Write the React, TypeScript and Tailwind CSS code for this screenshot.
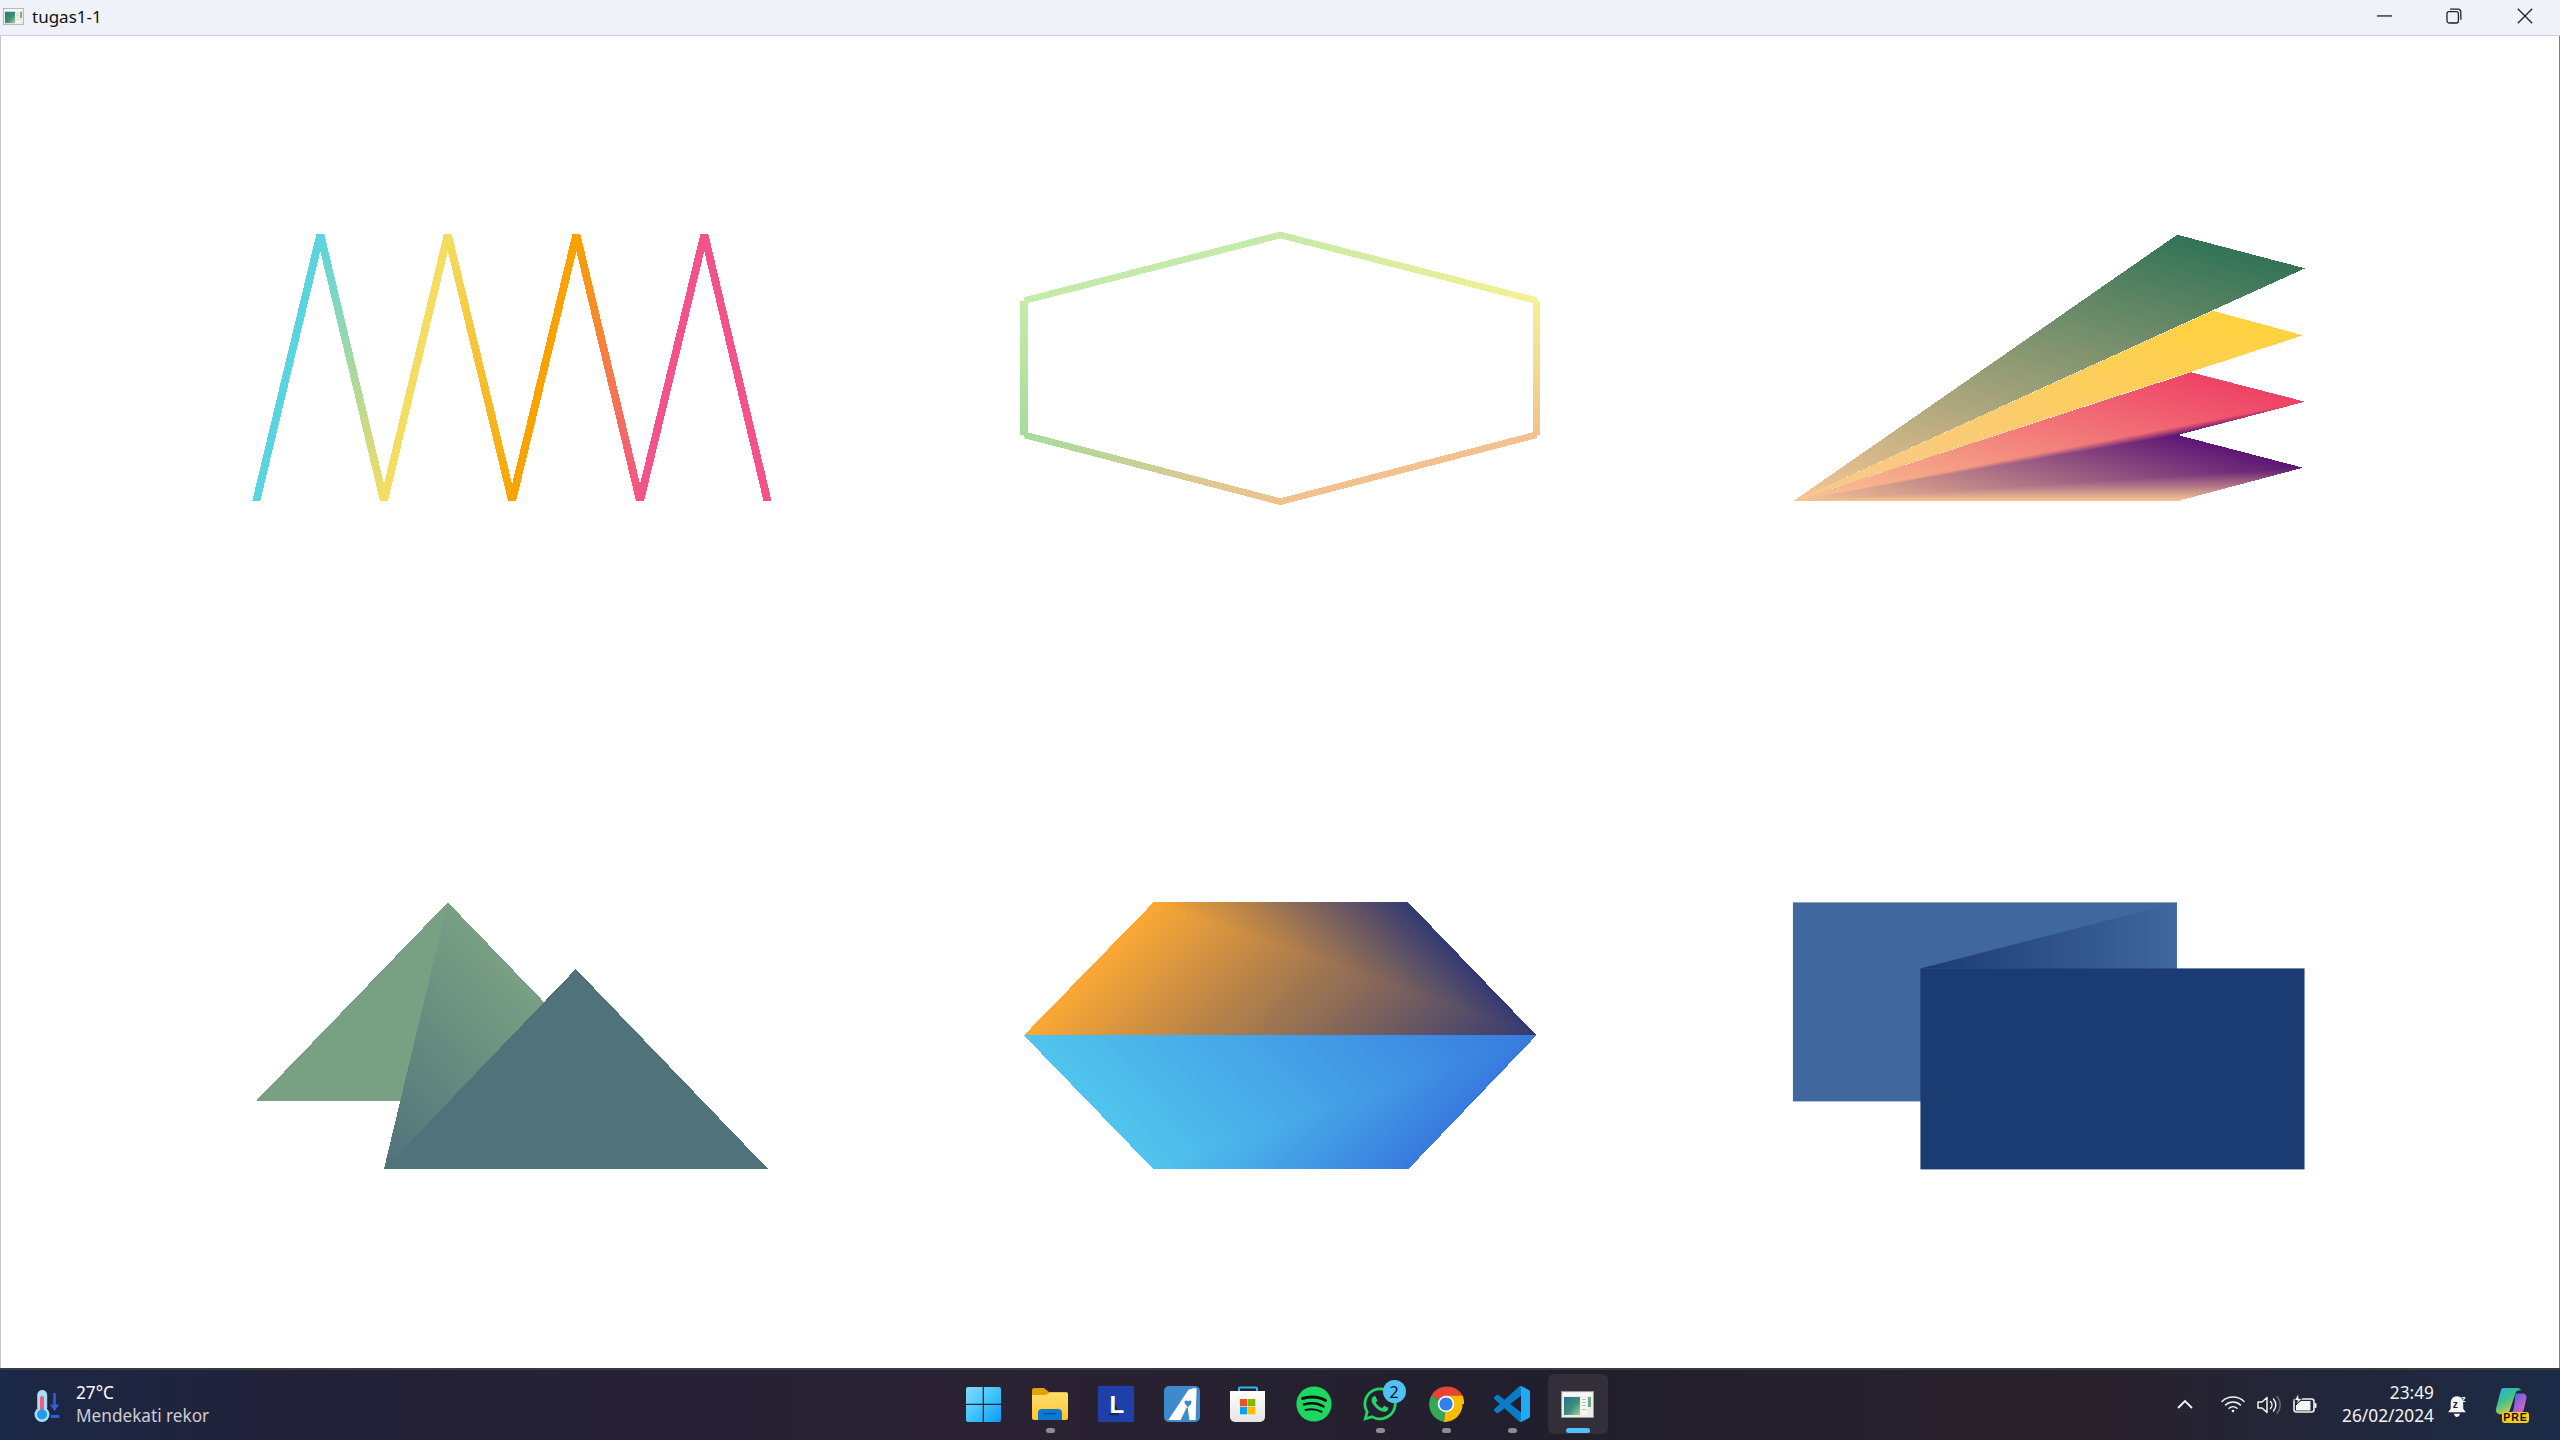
import React from "react";
import { FaWhatsapp } from "react-icons/fa";

type P = [number, number];
const str = (ps: P[]) => ps.map((p) => p.join(",")).join(" ");

function foot(a: P, b: P, c: P): P {
  const dx = c[0] - b[0];
  const dy = c[1] - b[1];
  const t = ((a[0] - b[0]) * dx + (a[1] - b[1]) * dy) / (dx * dx + dy * dy);
  return [b[0] + t * dx, b[1] + t * dy];
}

function hex(c: string): number[] {
  return [1, 3, 5].map((i) => parseInt(c.slice(i, i + 2), 16));
}
function mix(a: string, b: string, t: number): string {
  const x = hex(a);
  const y = hex(b);
  return (
    "#" +
    x.map((v, i) => Math.round(v + (y[i] - v) * t).toString(16).padStart(2, "0")).join("")
  );
}

function GradPoly({ id, pts, from, to, c1, c2 }: { id: string; pts: P[]; from: P; to: P; c1: string; c2: string }) {
  return (
    <>
      <defs>
        <linearGradient id={id} gradientUnits="userSpaceOnUse" x1={from[0]} y1={from[1]} x2={to[0]} y2={to[1]}>
          <stop offset="0" stopColor={c1} />
          <stop offset="1" stopColor={c2} />
        </linearGradient>
      </defs>
      <polygon points={str(pts)} fill={`url(#${id})`} />
    </>
  );
}

// triangle: a has colour ca, b and c share colour cb
function Tri({ id, a, b, c, ca, cb }: { id: string; a: P; b: P; c: P; ca: string; cb: string }) {
  return <GradPoly id={id} pts={[a, b, c]} from={a} to={foot(a, b, c)} c1={ca} c2={cb} />;
}

function Gouraud({ id, a, b, c, ca, cb, cc, n = 28 }: { id: string; a: P; b: P; c: P; ca: string; cb: string; cc: string; n?: number }) {
  const items = [];
  for (let i = 0; i < n; i++) {
    const t0 = i / n;
    const t1 = (i + 1) / n;
    const p0: P = [b[0] + (c[0] - b[0]) * t0, b[1] + (c[1] - b[1]) * t0];
    const p1: P = [b[0] + (c[0] - b[0]) * t1, b[1] + (c[1] - b[1]) * t1];
    const col = mix(cb, cc, (t0 + t1) / 2);
    items.push(<GradPoly key={i} id={`${id}-${i}`} pts={[a, p0, p1]} from={a} to={foot(a, p0, p1)} c1={ca} c2={col} />);
  }
  return <>{items}</>;
}

// the figures are measured on a 522.67-wide grid, drawn 560 wide
function Figure({ children, smooth }: { children: React.ReactNode; smooth?: boolean }) {
  return (
    <svg
      width="560"
      height="300"
      viewBox="0 0 522.67 300"
      preserveAspectRatio="none"
      shapeRendering={smooth ? undefined : "crispEdges"}
      className="block"
    >
      {children}
    </svg>
  );
}

function ZigZag() {
  const xs = [24.5, 84.3, 143.7, 203.3, 263.3, 323.3, 382.7, 442.7, 501.7];
  const ys = [291, 24.3, 291, 24.3, 291, 24.3, 291, 24.3, 291];
  const cols: [string, string][] = [
    ["#59D5E0", "#59D5E0"],
    ["#59D5E0", "#F5DD61"],
    ["#F5DD61", "#F5DD61"],
    ["#F5DD61", "#FAA300"],
    ["#FAA300", "#FAA300"],
    ["#FAA300", "#F4538A"],
    ["#F4538A", "#F4538A"],
    ["#F4538A", "#F4538A"],
  ];
  const h = 3.75;
  return (
    <Figure>
      {cols.map((c, i) => (
        <GradPoly
          key={i}
          id={`zz${i}`}
          pts={[
            [xs[i] - h, ys[i]],
            [xs[i] + h, ys[i]],
            [xs[i + 1] + h, ys[i + 1]],
            [xs[i + 1] - h, ys[i + 1]],
          ]}
          from={[xs[i], ys[i]]}
          to={[xs[i + 1], ys[i + 1]]}
          c1={c[0]}
          c2={c[1]}
        />
      ))}
    </Figure>
  );
}

function HexOutline() {
  const T: P = [261.7, 25];
  const RT: P = [501, 90.7];
  const RB: P = [501, 224.7];
  const B: P = [261.7, 291.7];
  const LB: P = [22.3, 224.7];
  const LT: P = [22.3, 90.7];
  const segs: [P, P, string, string][] = [
    [T, RT, "#C5EBAA", "#F6F193"],
    [RT, RB, "#F6F193", "#F2C18D"],
    [RB, B, "#F2C18D", "#F2C18D"],
    [B, LB, "#F2C18D", "#A5DD9B"],
    [LB, LT, "#A5DD9B", "#C5EBAA"],
    [LT, T, "#C5EBAA", "#C5EBAA"],
  ];
  const h = 3.4;
  return (
    <Figure>
      {segs.map(([a, b, c1, c2], i) => {
        const vertical = a[0] === b[0];
        const pts: P[] = vertical
          ? [
              [a[0] - h, a[1]],
              [a[0] + h, a[1]],
              [b[0] + h, b[1]],
              [b[0] - h, b[1]],
            ]
          : [
              [a[0], a[1] - h],
              [a[0], a[1] + h],
              [b[0], b[1] + h],
              [b[0], b[1] - h],
            ];
        return <GradPoly key={i} id={`hx${i}`} pts={pts} from={a} to={b} c1={c1} c2={c2} />;
      })}
    </Figure>
  );
}

function Fan() {
  const A: P = [21.5, 291.3];
  const peach = "#F8C794";
  const green = "#337357";
  const gold = "#FFD23F";
  const pink = "#EE4266";
  const purple = "#5E1675";
  const P1: P = [380, 24.7];
  const P2: P = [499.3, 58.3];
  const P3: P = [413.3, 100.8];
  const P4: P = [497.5, 125.3];
  const P5: P = [393, 162.3];
  const P6: P = [499.3, 191.7];
  const P7: P = [380.5, 225];
  const P8: P = [497.5, 257.7];
  const P9: P = [379.5, 291.3];
  return (
    <Figure>
      <Tri id="f1" a={A} b={P1} c={P2} ca={peach} cb={green} />
      <Tri id="f2" a={A} b={P3} c={P4} ca={peach} cb={gold} />
      <Tri id="f3" a={A} b={P5} c={P6} ca={peach} cb={pink} />
      <Gouraud id="f4" a={A} b={P6} c={P7} ca={peach} cb={pink} cc={purple} />
      <Tri id="f5" a={A} b={P7} c={P8} ca={peach} cb={purple} />
      <GradPoly id="f6" pts={[A, P8, P9]} from={[P8[0], P8[1]]} to={[P8[0], P9[1]]} c1={purple} c2={peach} />
    </Figure>
  );
}

function Mountains() {
  const apex: P = [203.3, 22.3];
  const left: P = [24.3, 221];
  const right: P = [382, 221];
  const base: P = [143.7, 289];
  return (
    <Figure>
      <polygon points={str([left, apex, right])} fill="#78A083" />
      <Tri id="m1" a={base} b={apex} c={right} ca="#50727B" cb="#78A083" />
      <polygon points={str([base, [322.7, 89], [502.2, 289]])} fill="#50727B" />
    </Figure>
  );
}

function HexFilled() {
  const L: P = [22.3, 155.3];
  const R: P = [500.7, 155.3];
  const TL: P = [143.3, 22.3];
  const TR: P = [381, 22.3];
  const BL: P = [143.3, 289.3];
  const BR: P = [381, 289.3];
  const orange = "#FBA834";
  const navy = "#333A73";
  const cyan = "#50C4ED";
  const blue = "#387ADF";
  return (
    <Figure>
      <Tri id="h1" a={R} b={L} c={TL} ca={navy} cb={orange} />
      <Tri id="h2" a={TL} b={TR} c={R} ca={orange} cb={navy} />
      <Tri id="h3" a={R} b={L} c={BL} ca={blue} cb={cyan} />
      <Tri id="h4" a={BL} b={BR} c={R} ca={cyan} cb={blue} />
    </Figure>
  );
}

function Rects() {
  return (
    <Figure smooth>
      <rect x="21.4" y="22.4" width="358.3" height="199" fill="#40679E" />
      <GradPoly id="r1" pts={[[140.4, 88.6], [379.7, 22.4], [379.7, 88.6]]} from={[140.4, 0]} to={[379.7, 0]} c1="#1B3C73" c2="#40679E" />
      <rect x="140.4" y="88.4" width="358.5" height="201" fill="#1B3C73" />
    </Figure>
  );
}

function AppWindowIcon({ w, h }: { w: number; h: number }) {
  return (
    <svg width={w} height={h} viewBox="0 0 33 27" className="block">
      <defs>
        <linearGradient id={`awg${w}`} x1="0" y1="0" x2="1" y2="1">
          <stop offset="0" stopColor="#2E6F8F" />
          <stop offset="0.55" stopColor="#3C8F78" />
          <stop offset="1" stopColor="#A8CFA0" />
        </linearGradient>
      </defs>
      <rect x="0.5" y="0.5" width="32" height="26" fill="#ECECE8" stroke="#9A9A9A" />
      <rect x="2" y="2" width="29" height="3" fill="#F8F8F8" />
      <rect x="3" y="6" width="16" height="18" fill={`url(#awg${w})`} />
      <rect x="20" y="6" width="6" height="18" fill="#F6F6F2" />
      <rect x="21" y="8" width="4" height="1" fill="#B9B9B9" />
      <rect x="21" y="11" width="4" height="1" fill="#B9B9B9" />
      <rect x="21" y="14" width="4" height="1" fill="#B9B9B9" />
      <rect x="21" y="18" width="4" height="1" fill="#B9B9B9" />
      <rect x="27" y="6" width="3" height="10" fill="#6FA98A" />
    </svg>
  );
}

function TitleBar() {
  return (
    <div className="h-[36px] flex items-center bg-[#EFF2F8] border-b border-b-[#CFCFD2] shrink-0 relative">
      <div className="ml-[3px] mr-[8px] -mt-[3px]">
        <AppWindowIcon w={21} h={17} />
      </div>
      <span className="text-[17px] leading-none text-[#111] -mt-[2px] font-['Noto_Sans',sans-serif]">tugas1-1</span>
      <div className="ml-auto flex items-center -mt-[3px]">
        <svg width="15" height="2" viewBox="0 0 15 2" className="block mr-[54px]">
          <rect width="15" height="1.3" y="0.3" fill="#222" />
        </svg>
        <svg width="16" height="16" viewBox="0 0 16 16" fill="none" stroke="#222" strokeWidth="1.3" className="block mr-[55px]">
          <rect x="1" y="3.6" width="11.4" height="11.4" rx="2" />
          <path d="M4 1.2h7.8a3 3 0 0 1 3 3v7.6" />
        </svg>
        <svg width="16" height="16" viewBox="0 0 16 16" fill="none" stroke="#222" strokeWidth="1.3" className="block mr-[27px]">
          <path d="M0.8 0.8 15.2 15.2M15.2 0.8 0.8 15.2" />
        </svg>
      </div>
    </div>
  );
}

function Thermo() {
  return (
    <svg width="28" height="33" viewBox="0 0 28 33" className="block">
      <rect x="4.2" y="1" width="10" height="22" rx="5" fill="#A9DBFA" />
      <circle cx="9" cy="25.5" r="7.5" fill="#A9DBFA" />
      <rect x="7" y="7" width="4" height="15" rx="2" fill="#F0607A" />
      <circle cx="9" cy="25.5" r="5" fill="#1E9BEA" />
      <path d="M21.5 4v16" stroke="#2F5FD8" strokeWidth="2.6" />
      <path d="M16.8 15.5h9.4l-4.7 6.5z" fill="#2F5FD8" />
      <rect x="17.5" y="26" width="9" height="3" rx="1.2" fill="#2F5FD8" />
    </svg>
  );
}

function WinLogo() {
  return (
    <svg width="35" height="35" viewBox="0 0 35 35" className="block">
      <defs>
        <linearGradient id="wl" x1="0" y1="0" x2="1" y2="1">
          <stop offset="0" stopColor="#86DBFB" />
          <stop offset="0.5" stopColor="#3FC5FB" />
          <stop offset="1" stopColor="#0A97F7" />
        </linearGradient>
        <clipPath id="wlc">
          <path d="M0 2a2 2 0 0 1 2-2h14.7v16.7H0zM18 0h15a2 2 0 0 1 2 2v14.7H18zM0 18h16.7v17H2a2 2 0 0 1-2-2zM18 18h17v15a2 2 0 0 1-2 2H18z" />
        </clipPath>
      </defs>
      <rect width="35" height="35" fill="url(#wl)" clipPath="url(#wlc)" />
    </svg>
  );
}

function Folder() {
  return (
    <svg width="36" height="33" viewBox="0 0 36 33" className="block">
      <defs>
        <linearGradient id="fd" x1="0" y1="0" x2="0" y2="1">
          <stop offset="0" stopColor="#FFDD6E" />
          <stop offset="1" stopColor="#FFC52F" />
        </linearGradient>
      </defs>
      <path d="M0 2a2 2 0 0 1 2-2h10l5 4h17a2 2 0 0 1 2 2v4H0z" fill="#DFA20A" />
      <path d="M0 7h14l4-2.500h16a2 2 0 0 1 2 2V30a2 2 0 0 1-2 2H2a2 2 0 0 1-2-2z" fill="url(#fd)" />
      <path d="M6 32v-7a4 4 0 0 1 4-4h16a4 4 0 0 1 4 4v7z" fill="#0B79D0" />
      <rect x="12" y="25" width="12" height="1.2" fill="#0A4E8C" />
    </svg>
  );
}

function LBox() {
  return (
    <svg width="36" height="36" viewBox="0 0 36 36" className="block">
      <rect width="36" height="36" fill="#1F3FAB" />
      <path d="M13 9v17l-3 3 1 .2h10V26z" fill="#0B2A55" />
      <text x="11.5" y="26.500" fontFamily="'Liberation Sans',sans-serif" fontWeight="700" fontSize="24" fill="#FFFFFF">L</text>
    </svg>
  );
}

function AIcon() {
  return (
    <svg width="36" height="36" viewBox="0 0 36 36" className="block">
      <rect width="36" height="36" rx="5" fill="#3E8ACB" />
      <path d="M4.300 34 24.300 4c2.500-1.500 6-2 8.300-1.700L31.600 34h-6.300l-1.800-14-7 14z" fill="#FFFFFF" />
      <path d="M20.500 15.500c1-1.600 3-1.200 3.500 0 .6-1.200 2.500-1.600 3.500 0 .6 1.500-1.500 4-3.500 5.500-2-1.500-4-4-3.500-5.500z" fill="#3E8ACB" />
    </svg>
  );
}

function StoreIcon() {
  return (
    <svg width="36" height="36" viewBox="0 0 36 36" className="block">
      <defs>
        <linearGradient id="st" x1="0" y1="0" x2="0" y2="1">
          <stop offset="0" stopColor="#FFFFFF" />
          <stop offset="1" stopColor="#E4E4E4" />
        </linearGradient>
      </defs>
      <path d="M9 6V2.500a1 1 0 0 1 1-1h16a1 1 0 0 1 1 1V6" fill="none" stroke="#2EB8F0" strokeWidth="2" />
      <path d="M0 5h35v26a5 5 0 0 1-5 5H5a5 5 0 0 1-5-5z" fill="url(#st)" />
      <rect x="10" y="13" width="7.300" height="7.300" fill="#F25022" />
      <rect x="18" y="13" width="7.300" height="7.300" fill="#7FBA00" />
      <rect x="10" y="21" width="7.300" height="7.300" fill="#00A4EF" />
      <rect x="18" y="21" width="7.300" height="7.300" fill="#FFB900" />
    </svg>
  );
}

function Spotify() {
  return (
    <svg width="36" height="36" viewBox="0 0 36 36" className="block">
      <circle cx="18" cy="18" r="17.600" fill="#1ED760" />
      <g fill="none" stroke="#111" strokeLinecap="round">
        <path d="M6.500 12.500c8-2.300 16.500-1.700 23 2" strokeWidth="3" />
        <path d="M8 18.500c6.500-1.800 14-1.300 19.500 2" strokeWidth="2.500" />
        <path d="M9.500 24c5.500-1.300 11-.9 16 1.800" strokeWidth="2" />
      </g>
    </svg>
  );
}

function Chrome() {
  return (
    <svg width="36" height="36" viewBox="0 0 36 36" className="block">
      <path d="M18 18 3.400 9.500A18 18 0 0 1 34.600 9.500H18z" fill="#EA4335" />
      <path d="M18 18 3.400 9.500A18 18 0 0 0 16 36z" fill="#34A853" />
      <path d="M18 18h16.600A18 18 0 0 1 16 36l2-18z" fill="#FBBC04" />
      <path d="M18 9.500h16.600a18 18 0 0 1 1.400 8.500H18z" fill="#FBBC04" />
      <circle cx="18" cy="18" r="8.300" fill="#FFFFFF" />
      <circle cx="18" cy="18" r="6.600" fill="#2F80ED" />
    </svg>
  );
}

function VSCode() {
  return (
    <svg width="36" height="36" viewBox="0 0 100 100" className="block">
      <path
        d="M96.500 10.800 75.900.9a6.200 6.200 0 0 0-7.100 1.200L29.300 38.100 12.100 25.100a4.200 4.200 0 0 0-5.300.2L1.300 30.300a4.200 4.200 0 0 0 0 6.200L16.200 50 1.300 63.500a4.200 4.200 0 0 0 0 6.200l5.500 5a4.200 4.200 0 0 0 5.300.2l17.200-13 39.500 36a6.200 6.200 0 0 0 7.100 1.200l20.600-9.900a6.200 6.200 0 0 0 3.500-5.600V16.400a6.200 6.200 0 0 0-3.500-5.600zM75 72.700 45.100 50 75 27.300z"
        fill="#0A7CC7"
      />
      <path d="M71 1 75.900.9 96.500 10.800a6.200 6.200 0 0 1 3.500 5.600v67.200a6.200 6.200 0 0 1-3.500 5.600L75.900 99.100 71 99c2 0 4-2 4-5V6c0-3-2-5-4-5z" fill="#23A9F2" />
    </svg>
  );
}

function Wifi() {
  return (
    <svg width="24" height="18" viewBox="0 0 24 18" fill="none" stroke="#F4F4F4" strokeWidth="1.500" strokeLinecap="round" className="block">
      <path d="M1 6.500a16 16 0 0 1 22 0" />
      <path d="M4.500 10a11 11 0 0 1 15 0" />
      <path d="M8 13.200a6 6 0 0 1 8 0" />
      <circle cx="12" cy="16" r="1.300" fill="#F4F4F4" stroke="none" />
    </svg>
  );
}

function Volume() {
  return (
    <svg width="24" height="20" viewBox="0 0 24 20" fill="none" strokeWidth="1.500" strokeLinecap="round" strokeLinejoin="round" className="block">
      <path d="M1 7v6h4l5 4.500v-15L5 7z" stroke="#F4F4F4" />
      <path d="M13.500 6.500a5 5 0 0 1 0 7" stroke="#F4F4F4" />
      <path d="M16.500 4a9 9 0 0 1 0 12" stroke="#F4F4F4" />
      <path d="M20 1.500a13 13 0 0 1 0 17" stroke="#6A6670" />
    </svg>
  );
}

function Battery() {
  return (
    <svg width="24" height="20" viewBox="0 0 24 20" className="block">
      <rect x="1" y="6" width="20" height="13" rx="2.500" fill="none" stroke="#F4F4F4" strokeWidth="1.600" />
      <rect x="21.500" y="10" width="2" height="5" rx="1" fill="#F4F4F4" />
      <path d="M3 17.500V12L8 8h9.500v9.500z" fill="#F4F4F4" />
      <path d="M5.500 0 1.500 7.500h3L3 12 9 5.500H5.800z" fill="#F4F4F4" stroke="#241F2B" strokeWidth="0.800" />
    </svg>
  );
}

function Bell() {
  return (
    <svg width="22" height="24" viewBox="0 0 20 23" className="block overflow-visible">
      <path d="M9 3C4 3 3 7 3 11v4l-2.500 3.500h17L15 15v-4c0-4-1-8-6-8z" fill="#F4F4F4" />
      <path d="M6 20h6c-.5 2-1.500 3-3 3s-2.500-1-3-3z" fill="#F4F4F4" />
      <text x="5" y="14.500" fontFamily="'Liberation Sans',sans-serif" fontWeight="700" fontSize="10" fill="#241F2B">z</text>
      <text x="13" y="8.500" fontFamily="'Liberation Sans',sans-serif" fontWeight="700" fontSize="8.500" fill="#F4F4F4">z</text>
    </svg>
  );
}

function Copilot() {
  return (
    <div className="relative w-[36px] h-[35px]">
      <svg width="34" height="28" viewBox="0 0 34 30" className="absolute left-0 top-0">
        <defs>
          <linearGradient id="cpa" x1="0" y1="0" x2="0.6" y2="1">
            <stop offset="0" stopColor="#2AA8E8" />
            <stop offset="0.5" stopColor="#3FC28A" />
            <stop offset="1" stopColor="#E8C93A" />
          </linearGradient>
          <linearGradient id="cpb" x1="0" y1="0" x2="1" y2="1">
            <stop offset="0" stopColor="#1F6FE0" />
            <stop offset="0.5" stopColor="#A060D8" />
            <stop offset="1" stopColor="#E86FA8" />
          </linearGradient>
        </defs>
        <path d="M9 0h15c2 0 3 1 4 3-2-1-5-.5-6 2l-6 18c-1 3-3 5-6 5H5c-3 0-5-3-4-6L6 3c.5-2 1.500-3 3-3z" fill="url(#cpa)" />
        <path d="M22 6h7c3 0 5 2 4.500 5l-2.500 11c-.5 3-3 6-7 6H15c3-1 4-3 5-6z" fill="url(#cpb)" />
      </svg>
      <div className="absolute left-[8px] top-[24px] w-[27px] h-[11px] rounded-[3px] bg-[#FFC91F] flex items-center justify-center text-[10.5px] leading-none font-bold tracking-[1px] text-[#111] font-['Liberation_Sans',sans-serif]">
        PRE
      </div>
    </div>
  );
}

function Item({ children, dot, active }: { children: React.ReactNode; dot?: boolean; active?: boolean }) {
  return (
    <div className={`relative w-[60px] h-[60px] flex items-center justify-center rounded-[6px] ${active ? "bg-[#332F3A]" : ""}`}>
      {children}
      {dot && <div className="absolute left-[26px] bottom-[1px] w-[9px] h-[5px] rounded-full bg-[#8E8C92]" />}
      {active && <div className="absolute left-[18px] bottom-[1px] w-[24px] h-[5px] rounded-full bg-[#4FC1F5]" />}
    </div>
  );
}

function Taskbar() {
  return (
    <div className="h-[72px] shrink-0 border-t-2 border-t-[#3A3A41] bg-[linear-gradient(90deg,#1B2846_0%,#232138_12%,#2A2233_40%,#211F2D_60%,#29212C_82%,#1B2B47_100%)] flex items-start font-['Noto_Sans',sans-serif]">
      <div className="flex-1 flex items-center pl-[33px] h-full">
        <Thermo />
        <div className="ml-[15px] flex flex-col -mt-[2px]">
          <span className="text-[17.2px] leading-[23px] text-white">27°C</span>
          <span className="text-[17.2px] leading-[23px] text-[#CFCED2]">Mendekati rekor</span>
        </div>
      </div>
      <div className="flex gap-[6px] pt-[4px] pr-[2px]">
        <Item><WinLogo /></Item>
        <Item dot><Folder /></Item>
        <Item><LBox /></Item>
        <Item><AIcon /></Item>
        <Item><StoreIcon /></Item>
        <Item><Spotify /></Item>
        <Item dot>
          <FaWhatsapp className="w-[38px] h-[38px] text-[#25D366]" />
          <div className="absolute left-[33px] top-[6px] w-[23px] h-[23px] rounded-full bg-[#4FC1F5] flex items-center justify-center text-[16px] leading-none text-[#111]">2</div>
        </Item>
        <Item dot><Chrome /></Item>
        <Item dot><VSCode /></Item>
        <Item active><AppWindowIcon w={33} h={27} /></Item>
      </div>
      <div className="flex-1 flex items-center justify-end h-full pr-[30px]">
        <svg width="16" height="10" viewBox="0 0 16 10" fill="none" stroke="#F4F4F4" strokeWidth="1.800" className="block -mt-[3px]">
          <path d="M1 9 8 2l7 7" />
        </svg>
        <div className="ml-[28px] -mt-[3px]"><Wifi /></div>
        <div className="ml-[12px]"><Volume /></div>
        <div className="ml-[12px] -mt-[5px]"><Battery /></div>
        <div className="ml-[25px] -mt-[2px] flex flex-col items-end">
          <span className="text-[17.3px] leading-[23px] text-[#F4F4F4]">23:49</span>
          <span className="text-[17.3px] leading-[23px] text-[#F4F4F4]">26/02/2024</span>
        </div>
        <div className="ml-[13px]"><Bell /></div>
        <div className="ml-[25px]"><Copilot /></div>
      </div>
    </div>
  );
}

export default function App() {
  return (
    <div className="w-[2560px] h-[1440px] flex flex-col bg-white overflow-hidden">
      <TitleBar />
      <div className="flex-1 border-l border-l-[#C8C8C8] border-r border-r-[#7F7F7F] pl-[229px] pt-[174px]">
        <div className="grid grid-cols-[repeat(3,560px)] grid-rows-[repeat(2,300px)] gap-x-[210px] gap-y-[370px]">
          <ZigZag />
          <HexOutline />
          <Fan />
          <Mountains />
          <HexFilled />
          <Rects />
        </div>
      </div>
      <Taskbar />
    </div>
  );
}
